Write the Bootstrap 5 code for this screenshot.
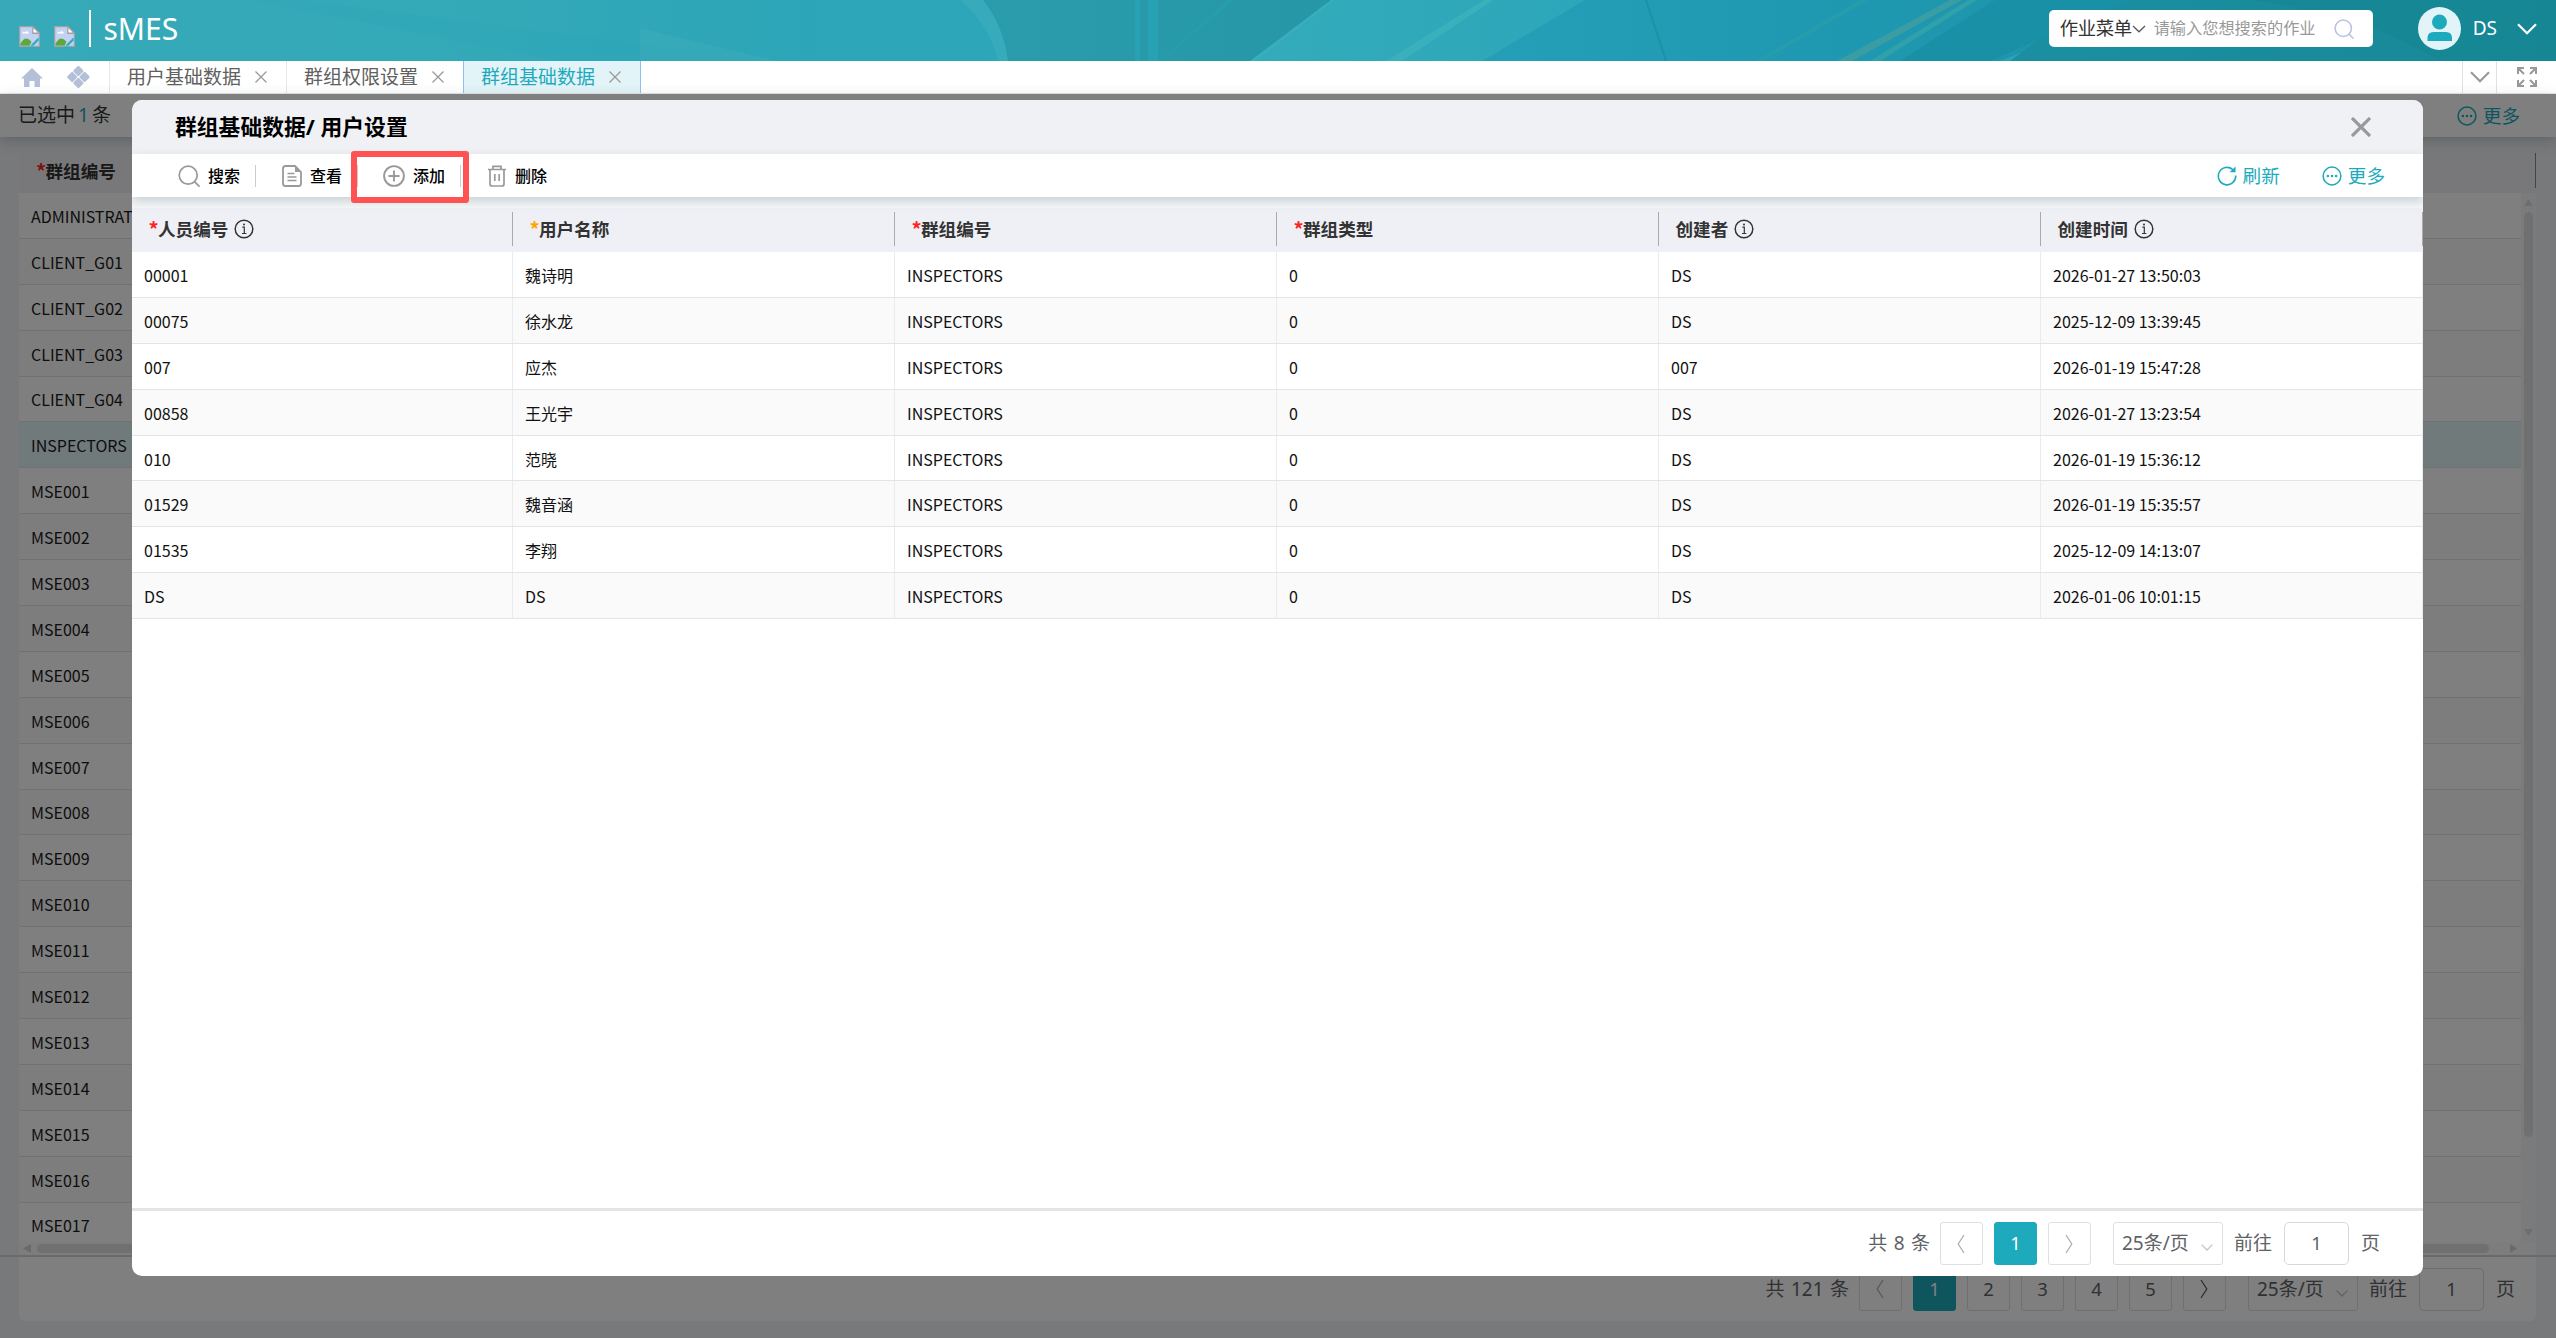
<!DOCTYPE html>
<html lang="zh-CN">
<head>
<meta charset="utf-8">
<title>sMES</title>
<link href="https://cdn.jsdelivr.net/npm/bootstrap@5.3.0/dist/css/bootstrap.min.css" rel="stylesheet">
<style>
  :root { --teal: #1eaabd; --ui: "Noto Sans", "Noto Sans CJK SC", sans-serif; --grid: "Noto Sans CJK SC", "Noto Sans", sans-serif; }
  body { font-family: var(--ui); font-size: 19px; color: #606266; background: #f0f2f5; height: 100vh; overflow: hidden; line-height: 1.2; }
  svg { display: block; flex: none; }
  .topbar { height: 61px; background: #2ba3b6; }
  .topbar-art { position: absolute; inset: 0; width: 2556px; height: 61px; }
  .brand-broken { margin: 12px 14px 0 0; }
  .brand-broken.is-first { margin-left: 19px; }
  .brand-rule { width: 1.5px; height: 37px; background: #fff; margin-bottom: 4px; }
  .brand-name { font-size: 30px; color: #fff; line-height: 37px; margin: 0 0 5px 13px; }
  .menu-search { width: 324px; height: 37px; border-radius: 5px; margin-bottom: 4px; background: #fff; }
  .menu-kind { color: #333; font-size: 18.4px; margin-left: 11px; letter-spacing: -.4px; }
  .menu-hint { color: #999; font-size: 16.2px; margin-left: 8px; }
  .menu-lens { margin-left: 18px; color: #b8c4dc; }
  .face { width: 43px; height: 43px; border-radius: 50%; background: #e2f4f7; margin: 0 12px 4px 45px; overflow: hidden; }
  .user-caret { margin: 0 19px 4px 20px; }
  .tabstrip { height: 33px; background: #fff; border-bottom: 1px solid #e4e4e4; }
  .wtab { height: 32px; border-right: 1px solid #e6e6e6; padding-left: 17px; color: #606060; }
  .wtab.is-on { background: #e2f4f7; color: var(--teal); border-left: 1px solid #8fc0f5; border-right: 1px solid #8fc0f5; }
  .wtab svg { margin-left: 13px; margin-right: 18px; color: #999; }
  .wtab-void { width: 19px; padding: 0; }
  .tab-menu { width: 35px; color: #999; }
  .nav-ico { color: #b4c0d8; }
  .stage { height: 1244px; }
  .selbar { height: 43px; background: #fff; box-shadow: 0 4px 12px rgba(60,80,90,.25); padding-left: 18px; color: #333; position: relative; z-index: 1; }
  .sel-num { color: var(--teal); margin: 0 3px; }
  .sel-sep { width: 1px; height: 19px; background: #999; margin-left: 21px; }
  .bgrid { margin: 11px 20px 0 19px; height: 1094px; font-family: var(--grid); }
  .bgrid-head { height: 45px; background: #f0f1f5; padding-left: 17px; font-size: 17.6px; font-weight: 700; color: #333; }
  .bgrid-headrule { width: 1px; height: 35px; background: #888; }
  .bgrid-body { height: 1049px; background: #fff; overflow: hidden; }
  .brow { height: 45.9px; border-bottom: 1px solid #e0e3ea; padding: 2px 0 0 12px; font-size: 16px; color: #1a1a1a; flex: none; background: #fff; }
  .brow:nth-child(even) { background: #fafafa; }
  .brow.is-picked { background: #e2f4f7; }
  .vscroll { width: 15px; background: #f6f6f6; padding: 6px 3px; }
  .vthumb { width: 9px; height: 925px; border-radius: 5px; background: #e1e1e1; margin-top: 6px; }
  .hscroll { height: 13px; margin: 0 20px 0 19px; padding: 0 19px 0 4px; background: #fafafa; }
  .hthumb { height: 9px; border-radius: 5px; background: #e1e1e1; margin: 0 21px 0 6px; }
  .bfoot { margin: 0 20px 0 19px; height: 64px; border-radius: 0 0 6px 6px; background: #fff; padding-right: 21px; }
  .footline { height: 2px; background: #d4d4d4; }
  .veil { position: absolute; top: 94px; left: 0; right: 0; bottom: 0; background: rgba(0,0,0,.5); padding: 6px 133px 62px 132px; z-index: 5; }
  .dialog { border-radius: 10px; background: #fff; overflow: hidden; }
  .dialog-head { height: 54px; background: #f0f1f5; padding: 0 52px 0 43px; }
  .dialog-title { font-size: 21.8px; font-weight: 700; color: #000; }
  .tools { height: 43px; background: #fff; padding: 0 38px 0 46px; box-shadow: 0 4px 9px rgba(90,110,120,.28); position: relative; z-index: 2; font-family: var(--grid); }
  .tool { font-size: 16px; font-weight: 500; color: #000; gap: 8px; }
  .tool-rule { width: 1px; height: 22px; background: #ccc; margin: 0 26px 0 15px; }
  .tool-r { font-size: 18.6px; color: var(--teal); font-family: var(--ui); gap: 6px; }
  .tool-r span { padding-top: 2px; }
  .callout { position: absolute; width: 118px; height: 52px; left: -32px; top: -14px; border: 6px solid #ff5353; border-radius: 3px; }
  .grid-gap { height: 11px; background: #f4f6f8; }
  .grid-wrap { font-family: var(--grid); }
  .ghead { height: 44px; background: #eff0f5; padding: 4px 0 6px; font-size: 17.6px; font-weight: 700; color: #333; }
  .gcol { width: 382px; flex: none; }
  .gcol:first-child { width: 381px; }
  .ghead .gcol { padding-left: 16.5px; border-right: 1.5px solid #aaa; }
  .ghead svg { margin-left: 6px; }
  .req { color: #f22; font-size: 20px; width: 9.500px; line-height: 20px; } .req.is-soft { color: #ffa500; }
  .grow-line { height: 45.9px; border-bottom: 1px solid #e2e4ec; font-size: 16px; color: #111; }
  .grow-line:nth-child(even) { background: #fafafa; }
  .grow-line .gcol { padding-left: 12px; border-right: 1px solid #e9ebef; height: 100%; line-height: 46px; }
  .dialog-foot { height: 68px; border-top: 3px solid #e4e4e4; padding-right: 43px; }
  .pg { height: 43px; width: 43px; border: 1px solid #dcdfe6; border-radius: 3px; margin-right: 11px; font-size: 18.4px; }
  .pg.is-on { background: var(--teal); border-color: var(--teal); color: #fff; }
  .pg-total { margin-right: 10px; word-spacing: 1.5px; }
  .pg-size { width: 110px; height: 43px; border: 1px solid #dcdfe6; border-radius: 3px; padding: 0 9px 0 8px; margin: 0 11px; }
  .pg-jump { width: 65px; height: 43px; border: 1px solid #d5d8de; border-radius: 5px; margin: 0 12px 0 12px; font-size: 18.4px; }
  .bfoot .pager { margin-top: 10px; height: 44px; }
</style>
<script src="https://cdn.jsdelivr.net/npm/bootstrap@5.3.0/dist/js/bootstrap.bundle.min.js"></script>
</head>
<body>
<svg width="0" height="0" class="position-absolute">
  <defs>
    <symbol id="i-search" viewBox="0 0 22 22"><g fill="none" stroke="currentColor" stroke-width="1.7" stroke-linecap="round"><circle cx="10.2" cy="10.2" r="9"/><path d="M17 17.2l4 4"/></g></symbol>
    <symbol id="i-x" viewBox="0 0 14 14"><path d="M1.500 1.500l11 11M12.500 1.500l-11 11" stroke="currentColor" stroke-width="1.300" fill="none"/></symbol>
    <symbol id="i-info" viewBox="0 0 20 20"><circle cx="10" cy="10" r="8.800" fill="none" stroke="currentColor" stroke-width="1.500"/><path d="M8.300 8.200H10.300V14.300M8 14.500h4.400" fill="none" stroke="currentColor" stroke-width="1.200"/><circle cx="10" cy="5.400" r="1" fill="currentColor"/></symbol>
    <symbol id="i-more" viewBox="0 0 20 20"><circle cx="10" cy="10" r="8.900" fill="none" stroke="currentColor" stroke-width="1.500"/><circle cx="5.900" cy="10" r="1.300" fill="currentColor"/><circle cx="10" cy="10" r="1.300" fill="currentColor"/><circle cx="14.100" cy="10" r="1.300" fill="currentColor"/></symbol>
    <symbol id="i-broken" viewBox="0 0 16 16"><path d="M.5.5h9.500l5.500 5v10H.5z" fill="#c3d2f2"/><path d="M1 15v-1.500Q3.500 9.500 5.500 9.500T9.500 12L8 15z" fill="#5ba93a"/><path d="M8.500 15l6.500-6.500V11L11 15z" fill="#37a9b8"/><path d="M2.500 5.800c0-1.500 1.600-1.700 2-.9C5.200 3.500 7.500 4 7.400 5.800z" fill="#fff"/><path d="M15.500 8V5.500L10.500.5H.5v15h7.500M11.500 15.500h4V12" fill="none" stroke="#a3a3a3"/><path d="M10.500.5v5h5z" fill="#fff" stroke="#a3a3a3"/></symbol>
    <symbol id="i-down" viewBox="0 0 20 12"><path d="M1 1.200l9 9 9-9" fill="none" stroke="currentColor" stroke-width="2.200"/></symbol>
    <symbol id="i-left" viewBox="0 0 8 20"><path d="M7 1L1.200 10 7 19" fill="none" stroke="currentColor" stroke-width="1.200"/></symbol>
    <symbol id="i-right" viewBox="0 0 8 20"><path d="M1 1l5.800 9L1 19" fill="none" stroke="currentColor" stroke-width="1.200"/></symbol>
  </defs>
</svg>

<header class="topbar d-flex align-items-center position-relative">
  <svg class="topbar-art" viewBox="0 0 2556 61" preserveAspectRatio="none">
    <defs>
      <linearGradient id="gl" x1="0" x2="1"><stop offset="0" stop-color="#37a9b8"/><stop offset=".5" stop-color="#33a9b8"/><stop offset=".8" stop-color="#2ca5b8"/><stop offset="1" stop-color="#2da6b9"/></linearGradient>
      <linearGradient id="gm" x1="0" x2="1"><stop offset="0" stop-color="#2a9cab"/><stop offset="1" stop-color="#2496a5"/></linearGradient>
      <linearGradient id="gt" x1="0" x2="1"><stop offset="0" stop-color="#33abbb"/><stop offset="1" stop-color="#2ca7b9"/></linearGradient>
      <linearGradient id="gr" x1="0" x2="1"><stop offset="0" stop-color="#249fb7"/><stop offset=".5" stop-color="#1f99b1"/><stop offset="1" stop-color="#1b93ab"/></linearGradient>
      <linearGradient id="ge" x1="0" x2="1"><stop offset="0" stop-color="#1b8fa1"/><stop offset="1" stop-color="#178896"/></linearGradient>
    </defs>
    <rect width="1010" height="61" fill="url(#gl)"/>
    <path d="M300 0L770 61H560L250 0z" fill="#2ea6b7" opacity=".35"/>
    <path d="M640 28L775 61H640z" fill="#3cabb9" opacity=".6"/>
    <path d="M983 0Q1003 25 1008 61H1400V0z" fill="url(#gm)"/>
    <path d="M960 0H983Q1003 25 1008 61H998Q990 25 960 0z" fill="#3aadbb" opacity=".8"/>
    <path d="M1135 0h5v61h-5zM1148 0h10v61h-10z" fill="#27a1b4"/>
    <path d="M1228 0h6L1162 61h-4z" fill="#269dae"/>
    <path d="M1335 0H1600L1500 61H1253z" fill="url(#gt)"/>
    <path d="M1335 0h-4L1250 61h5z" fill="#3aaebd"/>
    <path d="M1484 0h9L1402 61h-16z" fill="#3bb0bd"/>
    <path d="M1585 0H2150L2000 61H1482z" fill="url(#gr)"/>
    <path d="M1645 0l20 61h2L1647 0z" fill="#1c91a7"/>
    <path d="M1860 0L1755 61h8L1868 0z" fill="#2b9fa9" opacity=".6"/>
    <path d="M2090 0H2556V61H2010z" fill="url(#ge)"/>
    <path d="M1995 0H2130L1990 61H1900z" fill="#1a90a7"/>
    <path d="M1950 0h12L1852 61h-15z" fill="#3a9da3"/>
    <path d="M1968 0h9L1880 61h-10z" fill="#30a0aa"/>
    <path d="M2250 0Q2370 16 2440 61H2556V0z" fill="#168592" opacity=".6"/>
  </svg>
  <div class="d-flex align-items-center position-relative w-100">
    <svg class="brand-broken is-first" width="21" height="21"><use href="#i-broken"/></svg>
    <svg class="brand-broken" width="21" height="21"><use href="#i-broken"/></svg>
    <div class="brand-rule"></div>
    <div class="brand-name">sMES</div>
    <div class="menu-search d-flex align-items-center ms-auto">
      <span class="menu-kind">作业菜单</span>
      <svg width="14" height="8" viewBox="0 0 14 8"><path d="M1 1l6 5.800L13 1" fill="none" stroke="#555" stroke-width="1.200"/></svg>
      <span class="menu-hint">请输入您想搜索的作业</span>
      <svg class="menu-lens" width="20" height="20"><use href="#i-search"/></svg>
    </div>
    <div class="face"><svg width="43" height="43"><circle cx="21.500" cy="15" r="7.500" fill="#1eaabd"/><path d="M9.500 34v-3q0-6 6-6h12.500q6 0 6 6v3z" fill="#1eaabd"/></svg></div>
    <span class="text-white mb-1">DS</span>
    <svg class="user-caret text-white" width="20" height="12"><use href="#i-down"/></svg>
  </div>
</header>

<nav class="tabstrip d-flex align-items-center">
  <svg class="nav-ico" style="margin-left:20px" width="24" height="21" viewBox="0 0 24 21"><path d="M12 1L1 11.500h3V20h5.500v-6h5v6H20v-8.500h3z" fill="currentColor"/></svg>
  <svg class="nav-ico" style="margin-left:22px" width="25" height="24" viewBox="0 0 25 24"><g fill="currentColor"><rect x="8.400" y="2" width="8" height="8" rx="1.500" transform="rotate(45 12.400 6)"/><rect x="8.400" y="14" width="8" height="8" rx="1.500" transform="rotate(45 12.400 18)"/><rect x="2.200" y="8" width="8" height="8" rx="1.500" transform="rotate(45 6.200 12)"/><rect x="14.600" y="8" width="8" height="8" rx="1.500" transform="rotate(45 18.600 12)"/></g></svg>
  <div class="wtab wtab-void"></div>
  <div class="wtab d-flex align-items-center">用户基础数据<svg width="14" height="14"><use href="#i-x"/></svg></div>
  <div class="wtab border-end-0 d-flex align-items-center">群组权限设置<svg width="14" height="14"><use href="#i-x"/></svg></div>
  <div class="wtab is-on d-flex align-items-center">群组基础数据<svg width="14" height="14"><use href="#i-x"/></svg></div>
  <div class="tab-menu ms-auto d-flex align-items-center justify-content-center h-100 border-start border-end"><svg width="20" height="12"><use href="#i-down"/></svg></div>
  <svg style="margin:0 19px 0 20px;color:#999" width="20" height="20" viewBox="0 0 20 20"><path d="M1 7V1h6M1 1l6 6M13 1h6v6M19 1l-6 6M1 13v6h6M1 19l6-6M19 13v6h-6M19 19l-6-6" fill="none" stroke="currentColor" stroke-width="2"/></svg>
</nav>

<main class="stage d-flex flex-column">
  <div class="selbar d-flex align-items-center flex-shrink-0">
    <span>已选中</span><span class="sel-num">1</span><span>条</span><div class="sel-sep"></div>
    <div class="ms-auto tool-r d-flex align-items-center" style="margin-right:36px"><svg width="20" height="20"><use href="#i-more"/></svg><span>更多</span></div>
  </div>
  <div class="bgrid flex-shrink-0 d-flex flex-column">
    <div class="bgrid-head d-flex align-items-center flex-shrink-0"><span class="req">*</span>群组编号<div class="bgrid-headrule ms-auto"></div></div>
    <div class="bgrid-body d-flex">
      <div class="flex-grow-1 d-flex flex-column" id="groupRows"></div>
      <div class="vscroll d-flex flex-column align-items-center">
        <svg width="9" height="7"><path d="M4.500 0L9 7H0z" fill="#ddd"/></svg>
        <div class="vthumb flex-shrink-0"></div>
        <svg class="mt-auto" width="9" height="7"><path d="M4.500 7L0 0h9z" fill="#ddd"/></svg>
      </div>
    </div>
  </div>
  <div class="hscroll d-flex align-items-center flex-shrink-0">
    <svg width="8" height="9"><path d="M0 4.500L8 0v9z" fill="#d5d5d5"/></svg>
    <div class="hthumb flex-grow-1"></div>
    <svg width="7" height="9"><path d="M7 4.500L0 0v9z" fill="#d5d5d5"/></svg>
  </div>
  <div class="footline flex-shrink-0"></div>
  <div class="bfoot flex-shrink-0">
    <div class="pager d-flex align-items-center justify-content-end" id="pagerBack"></div>
  </div>
</main>

<div class="veil">
  <section class="dialog h-100 d-flex flex-column">
    <div class="dialog-head d-flex align-items-center justify-content-between flex-shrink-0">
      <div class="dialog-title">群组基础数据/ 用户设置</div>
      <svg width="20" height="20" viewBox="0 0 20 20"><path d="M1 1l18 18M19 1L1 19" stroke="#999" stroke-width="3.200" fill="none"/></svg>
    </div>
    <div class="tools d-flex align-items-center flex-shrink-0">
      <div class="tool d-flex align-items-center"><svg width="22" height="22" color="#999"><use href="#i-search"/></svg>搜索</div>
      <div class="tool-rule"></div>
      <div class="tool d-flex align-items-center"><svg width="20" height="22" viewBox="0 0 20 22"><path d="M13 1H3.500Q1 1 1 3.500v15Q1 21 3.500 21h13q2.500 0 2.500-2.500V7z" fill="none" stroke="#999" stroke-width="1.800"/><path d="M13 1v6h6z" fill="#999"/><path d="M5.500 8.500h7M5.500 12h9M5.500 15.500h9" stroke="#999" stroke-width="1.500"/></svg>查看</div>
      <div class="tool-rule" style="margin-right:25px"></div>
      <div class="tool d-flex align-items-center position-relative"><svg width="22" height="22" viewBox="0 0 22 22"><circle cx="11" cy="11" r="9.900" fill="none" stroke="#999" stroke-width="1.900"/><path d="M11 5.500v11M5.500 11h11" stroke="#999" stroke-width="1.900"/></svg>添加<div class="callout"></div></div>
      <div class="tool-rule"></div>
      <div class="tool d-flex align-items-center"><svg width="20" height="22" viewBox="0 0 20 22"><path d="M1 4.500h18M6 4V1.300h8V4M3 4.500V19q0 2 2 2h10q2 0 2-2V4.500M7.800 9v7M12.200 9v7" fill="none" stroke="#999" stroke-width="1.700"/></svg>删除</div>
      <div class="tool-r d-flex align-items-center ms-auto"><svg width="20" height="20" viewBox="0 0 20 20"><path d="M15.800 3.600A8.700 8.700 0 1 0 18.700 9.500" fill="none" stroke="currentColor" stroke-width="1.600"/><path d="M18.500.5v5.800h-5.800z" fill="currentColor"/></svg><span>刷新</span></div>
      <div class="tool-r d-flex align-items-center" style="margin-left:42px"><svg width="20" height="20"><use href="#i-more"/></svg><span>更多</span></div>
    </div>
    <div class="grid-gap flex-shrink-0"></div>
    <div class="grid-wrap flex-grow-1">
      <div class="ghead d-flex">
        <div class="gcol d-flex align-items-center"><span class="req">*</span>人员编号<svg width="20" height="20"><use href="#i-info"/></svg></div>
        <div class="gcol d-flex align-items-center"><span class="req is-soft">*</span>用户名称</div>
        <div class="gcol d-flex align-items-center"><span class="req">*</span>群组编号</div>
        <div class="gcol d-flex align-items-center"><span class="req">*</span>群组类型</div>
        <div class="gcol d-flex align-items-center">创建者<svg width="20" height="20"><use href="#i-info"/></svg></div>
        <div class="gcol d-flex align-items-center">创建时间<svg width="20" height="20"><use href="#i-info"/></svg></div>
      </div>
      <div id="userRows"></div>
    </div>
    <div class="dialog-foot d-flex align-items-center justify-content-end flex-shrink-0" id="pagerFront"></div>
  </section>
</div>

<script>
  const groups = ['ADMINISTRATORS', 'CLIENT_G01', 'CLIENT_G02', 'CLIENT_G03', 'CLIENT_G04', 'INSPECTORS'];
  for (let i = 1; i <= 17; i++) groups.push('MSE' + String(i).padStart(3, '0'));
  document.getElementById('groupRows').innerHTML = groups.map(g =>
    `<div class="brow d-flex align-items-center${g === 'INSPECTORS' ? ' is-picked' : ''}">${g}</div>`).join('');

  const users = [
    ['00001', '魏诗明', 'DS', '2026-01-27 13:50:03'],
    ['00075', '徐水龙', 'DS', '2025-12-09 13:39:45'],
    ['007', '应杰', '007', '2026-01-19 15:47:28'],
    ['00858', '王光宇', 'DS', '2026-01-27 13:23:54'],
    ['010', '范晓', 'DS', '2026-01-19 15:36:12'],
    ['01529', '魏音涵', 'DS', '2026-01-19 15:35:57'],
    ['01535', '李翔', 'DS', '2025-12-09 14:13:07'],
    ['DS', 'DS', 'DS', '2026-01-06 10:01:15']
  ];
  document.getElementById('userRows').innerHTML = users.map(u =>
    `<div class="grow-line d-flex">${[u[0], u[1], 'INSPECTORS', '0', u[2], u[3]].map(c => `<div class="gcol">${c}</div>`).join('')}</div>`).join('');

  const box = (inner, cls = '') => `<div class="pg d-flex align-items-center justify-content-center ${cls}">${inner}</div>`;
  const arrow = (dir, color) => `<svg width="8" height="20" color="${color}"><use href="#i-${dir}"/></svg>`;
  const pager = (total, pages, nextColor) =>
    `<span class="pg-total">共 ${total} 条</span>` + box(arrow('left', '#aaa')) +
    Array.from({ length: pages }, (_, i) => box(i + 1, i ? '' : 'is-on')).join('') + box(arrow('right', nextColor)) +
    `<div class="pg-size d-flex align-items-center justify-content-between"><span>25条/页</span><svg class="mt-2" width="12" height="9" color="#c0c4cc"><use href="#i-down"/></svg></div>
     <span>前往</span><div class="pg-jump d-flex align-items-center justify-content-center">1</div><span>页</span>`;
  document.getElementById('pagerFront').innerHTML = pager(8, 1, '#aaa');
  document.getElementById('pagerBack').innerHTML = pager(121, 5, '#555');
</script>
</body>
</html>
